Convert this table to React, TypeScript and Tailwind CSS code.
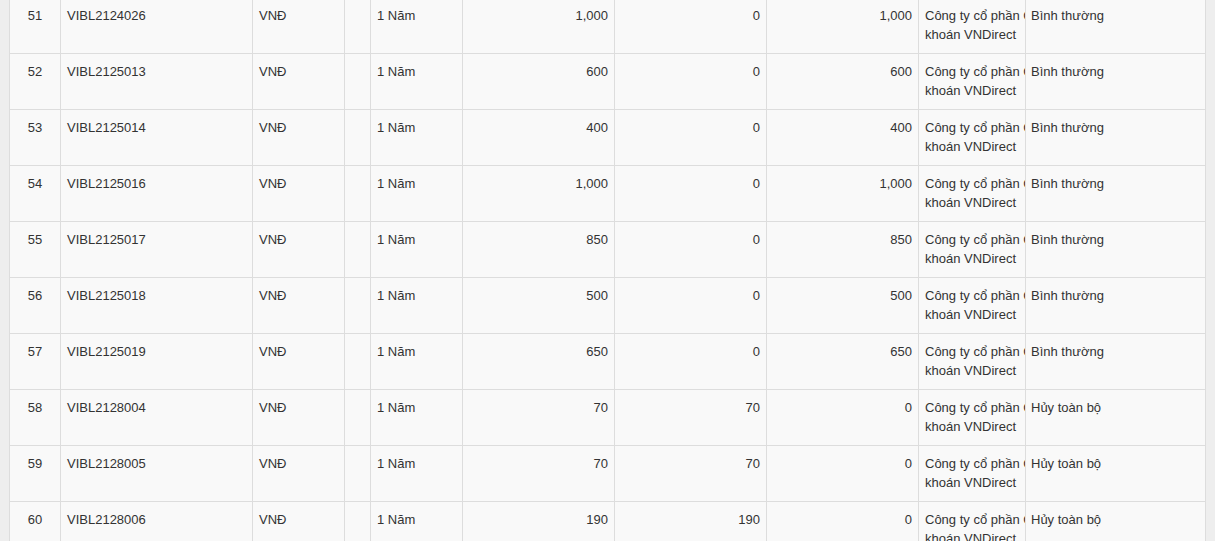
const rows = [
  { stt: 51, code: "VIBL2124026", amount: "1,000", cancel: "0", remain: "1,000", status: "Bình thường" },
  { stt: 52, code: "VIBL2125013", amount: "600", cancel: "0", remain: "600", status: "Bình thường" },
  { stt: 53, code: "VIBL2125014", amount: "400", cancel: "0", remain: "400", status: "Bình thường" },
  { stt: 54, code: "VIBL2125016", amount: "1,000", cancel: "0", remain: "1,000", status: "Bình thường" },
  { stt: 55, code: "VIBL2125017", amount: "850", cancel: "0", remain: "850", status: "Bình thường" },
  { stt: 56, code: "VIBL2125018", amount: "500", cancel: "0", remain: "500", status: "Bình thường" },
  { stt: 57, code: "VIBL2125019", amount: "650", cancel: "0", remain: "650", status: "Bình thường" },
  { stt: 58, code: "VIBL2128004", amount: "70", cancel: "70", remain: "0", status: "Hủy toàn bộ" },
  { stt: 59, code: "VIBL2128005", amount: "70", cancel: "70", remain: "0", status: "Hủy toàn bộ" },
  { stt: 60, code: "VIBL2128006", amount: "190", cancel: "190", remain: "0", status: "Hủy toàn bộ" },
];

const td = "border border-[#dddddd] px-[6px] pt-[8px] pb-[8px] align-top";

function App() {
  return (
    <main
      className="h-[541px] w-full overflow-hidden bg-[#eeeeee] px-[9px] text-[13px] leading-[19px] text-[#333333]"
      style={{ fontFamily: '"Liberation Sans", Arial, sans-serif' }}
    >
      <table className="-mt-[3px] w-full table-fixed border-collapse bg-[#f9f9f9]">
        <colgroup>
          <col className="w-[51px]" />
          <col className="w-[192px]" />
          <col className="w-[92px]" />
          <col className="w-[26px]" />
          <col className="w-[92px]" />
          <col className="w-[152px]" />
          <col className="w-[152px]" />
          <col className="w-[152px]" />
          <col className="w-[107px]" />
          <col />
        </colgroup>
        <tbody>
          { rows.map((row) => (
            <tr key={ row.stt } className="h-[56px]">
              <td className={ `${td} text-center` }>{ row.stt }</td>
              <td className={ td }>{ row.code }</td>
              <td className={ td }>VNĐ</td>
              <td className={ td }></td>
              <td className={ td }>1 Năm</td>
              <td className={ `${td} text-right` }>{ row.amount }</td>
              <td className={ `${td} text-right` }>{ row.cancel }</td>
              <td className={ `${td} text-right` }>{ row.remain }</td>
              <td className={ `${td} overflow-hidden pr-0` }>
                <div className="w-[150px]">Công ty cổ phần Chứng khoán VNDirect</div>
              </td>
              <td className={ `${td} pl-[5px]` }>{ row.status }</td>
            </tr>
          )) }
        </tbody>
      </table>
    </main>
  );
}

export default App;
